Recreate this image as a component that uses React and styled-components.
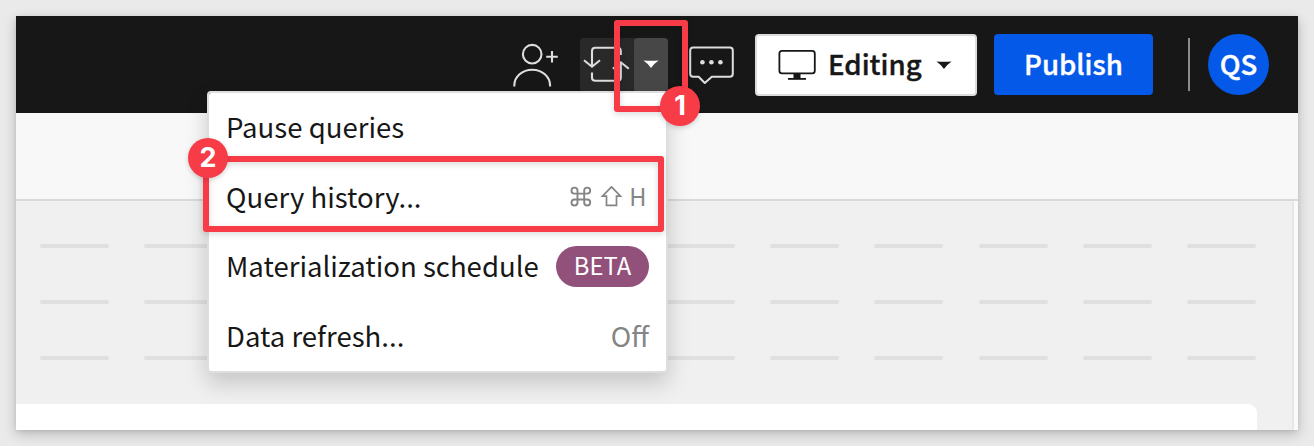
import React from "react";
import styled, { createGlobalStyle } from "styled-components";

const GlobalStyle = createGlobalStyle`
  * { box-sizing: border-box; }
  body {
    margin: 0;
    background: #eaeaea;
    font-family: "Noto Sans CJK JP", "Noto Sans", sans-serif;
    color: #171717;
    overflow: hidden;
  }
`;

const Page = styled.div`
  height: 446px;
  padding: 16px;
`;

const Window = styled.main`
  position: relative;
  display: flex;
  flex-direction: column;
  height: 414px;
  background: #f0f0f0;
  box-shadow: 0 4px 12px rgba(0, 0, 0, 0.22), 0 1px 4px rgba(0, 0, 0, 0.08);
`;

const Header = styled.header`
  display: flex;
  align-items: flex-start;
  justify-content: flex-end;
  height: 97px;
  flex: none;
  padding: 18px 29px 0 0;
  background: #171717;
`;

const IconButton = styled.div`
  display: flex;
  width: 48px;
  height: 54px;
  margin: 4px ${(p) => p.$gap}px 0 0;
`;

const SplitButton = styled.div`
  display: flex;
  width: 88px;
  height: 54px;
  margin: 4px 20px 0 0;
  border-radius: 4px;
  background: #292929;
`;

const SplitToggle = styled.div`
  display: flex;
  width: 34px;
  padding: 22px 0 0 9px;
  border-radius: 4px;
  background: #474747;
`;

const Button = styled.div`
  display: flex;
  align-items: center;
  width: ${(p) => p.$width}px;
  height: ${(p) => (p.$primary ? 61 : 62)}px;
  margin-right: ${(p) => (p.$primary ? 35 : 17)}px;
  padding-left: ${(p) => (p.$primary ? 30 : 21)}px;
  border: ${(p) => (p.$primary ? "0" : "2px solid #dcdcdc")};
  border-radius: 4px;
  background: ${(p) => (p.$primary ? "#0559e8" : "#fff")};
  color: ${(p) => (p.$primary ? "#fff" : "#171717")};
`;

const Label = styled.span`
  font-size: 27.6px;
  font-weight: 500;
  line-height: 56px;
  padding-bottom: 4px;
  -webkit-text-stroke: 0.4px currentColor;
  margin: 0 ${(p) => p.$after || 0}px 0 ${(p) => p.$before || 0}px;
  white-space: nowrap;
`;

const Divider = styled.div`
  width: 2px;
  height: 53px;
  margin: 4px 18px 0 0;
  background: #8b8b8b;
`;

const Avatar = styled.div`
  display: flex;
  align-items: center;
  justify-content: center;
  width: 61px;
  height: 61px;
  border-radius: 50%;
  background: #0559e8;
  color: #fff;
`;

const Toolbar = styled.div`
  height: 88px;
  flex: none;
  border-bottom: 2px solid #d9d9d9;
  background: #f8f8f8;
`;

const Workspace = styled.div`
  display: flex;
  flex: 1;
`;

const Canvas = styled.div`
  display: flex;
  flex-direction: column;
  flex: 1;
  padding-top: 43px;
`;

const DashRow = styled.div`
  display: flex;
  gap: 35.3px;
  height: 4px;
  padding-left: 24px;
  margin-bottom: 52px;
`;

const Dash = styled.span`
  width: 69px;
  flex: none;
  border-radius: 2px;
  background: #e0e0e0;
`;

const Card = styled.div`
  width: 1241px;
  flex: 1;
  margin-top: -8px;
  border-top-right-radius: 9px;
  background: #fff;
`;

const Gutter = styled.div`
  width: 6px;
  border-left: 2px solid #e7e7e7;
  background: #fafafa;
`;

const Menu = styled.div`
  position: absolute;
  left: 191px;
  top: 75px;
  width: 461px;
  height: 282px;
  border: 2px solid #dfdddd;
  border-radius: 4px;
  background: #fff;
  background-clip: padding-box;
  box-shadow: 0 10px 22px rgba(0, 0, 0, 0.18);
`;

const MenuRow = styled.div`
  display: flex;
  align-items: center;
  justify-content: space-between;
  height: 69.6px;
  padding: 0 ${(p) => p.$right || 17}px 0 17px;
  font-size: 27.55px;
  line-height: 40px;
  white-space: nowrap;
`;

const MenuText = styled.span`
  padding-bottom: 3px;
`;

const Shortcut = styled.span`
  display: flex;
  align-items: center;
  font-size: 23.6px;
  color: #858585;
`;

const Key = styled.span`
  padding-bottom: 3px;
`;

const Status = styled.span`
  padding-bottom: 3px;
  color: #858585;
`;

const BetaTag = styled.span`
  width: 93px;
  height: 41px;
  margin-bottom: 1px;
  border-radius: 21px;
  background: #92517a;
  color: #fff;
  font-size: 23.8px;
  line-height: 38px;
  text-align: center;
`;

const Highlight = styled.div`
  position: absolute;
  left: ${(p) => p.$x}px;
  top: ${(p) => p.$y}px;
  width: ${(p) => p.$w}px;
  height: ${(p) => p.$h}px;
  border: 6px solid #f73c47;
  border-radius: 3px;
  filter: drop-shadow(0 2px 3px rgba(0, 0, 0, 0.16));
`;

const StepBadge = styled.div`
  position: absolute;
  left: ${(p) => p.$x}px;
  top: ${(p) => p.$y}px;
  width: 40px;
  height: 40px;
  border-radius: 50%;
  background: #f73c47;
  color: #fff;
  font: 700 27px/39px Inter, sans-serif;
  text-align: center;
  box-shadow: 0 2px 5px rgba(0, 0, 0, 0.16);
`;

const Caret = ({ fill }) => (
  <svg width="16" height="9" viewBox="0 0 16 9">
    <path d="M0.4 0.4 Q8 1.2 15.6 0.4 Q11.5 3 8 8 Q4.5 3 0.4 0.4Z" fill={fill} />
  </svg>
);

const AddUserIcon = () => (
  <svg width="48" height="54" viewBox="512 38 48 54" fill="none" stroke="#dedede" strokeWidth="2.1">
    <circle cx="532.2" cy="54.2" r="9.3" />
    <path d="M514.3 86.5v-1a17.9 15.8 0 0 1 35.8 0v1M552 51v11.5M546.2 56.7h11.6" />
  </svg>
);

const SyncIcon = () => (
  <svg width="54" height="54" viewBox="580 38 54 54" fill="none" stroke="#dedede" strokeWidth="2.1">
    <path d="M592 66.5V51q0-3.3 3.3-3.3h22.2q3.3 0 3.3 3.3v4" />
    <path d="M584 60.2l8 6.5 8-6.5" />
    <path d="M592 72.5v5q0 3.3 3.3 3.3h22.2q3.3 0 3.3-3.3V62.7" />
    <path d="M612.8 68.8l8-6.5 8 6.5" />
  </svg>
);

const CommentIcon = () => (
  <svg width="48" height="54" viewBox="688 38 48 54" fill="none" stroke="#dedede" strokeWidth="2">
    <path d="M693.2 47.5h36.6q3 0 3 3v23.2q0 3-3 3h-18l-7 6.3-6.2-6.3h-5.4q-3 0-3-3V50.5q0-3 3-3z" strokeLinejoin="round" />
    <g fill="#dedede" stroke="none">
      <circle cx="702.4" cy="62.3" r="2.3" />
      <circle cx="711.4" cy="62.3" r="2.3" />
      <circle cx="720.4" cy="62.3" r="2.3" />
    </g>
  </svg>
);

const MonitorIcon = () => (
  <svg width="38" height="32" viewBox="778 49 38 32" fill="none" stroke="#171717">
    <rect x="779.4" y="50.9" width="35.4" height="22.4" rx="2.6" strokeWidth="1.8" />
    <path d="M793.5 74h7v4h-7z" fill="#171717" stroke="none" />
    <path d="M788 78.9h18" strokeWidth="1.8" />
  </svg>
);

const CommandIcon = () => (
  <svg width="22" height="22" viewBox="570 186 22 22" fill="none" stroke="#858585" strokeWidth="1.9">
    <path d="M577.5 193.6h-3a3 3 0 1 1 3-3.2v12.2a3 3 0 1 1-3-3.1h12.8a3 3 0 1 1-3.1 3.1v-12.2a3 3 0 1 1 3.1 3.2z" />
  </svg>
);

const ShiftIcon = () => (
  <svg width="37" height="22" viewBox="592 186 37 22" fill="none" stroke="#858585" strokeWidth="1.7">
    <path d="M611.5 186.8l9 9.3h-4v9.2h-10v-9.2h-4z" />
  </svg>
);

export default function App() {
  return (
    <>
      <GlobalStyle />
      <Page>
        <Window>
          <Header>
            <IconButton $gap={20}><AddUserIcon /></IconButton>
            <SplitButton>
              <SyncIcon />
              <SplitToggle><Caret fill="#fff" /></SplitToggle>
            </SplitButton>
            <IconButton $gap={19}><CommentIcon /></IconButton>
            <Button $width={222}>
              <MonitorIcon />
              <Label $before={12} $after={14.5}>Editing</Label>
              <Caret fill="#171717" />
            </Button>
            <Button $primary $width={159}><Label>Publish</Label></Button>
            <Divider />
            <Avatar><Label>QS</Label></Avatar>
          </Header>
          <Toolbar />
          <Workspace>
            <Canvas>
              {[0, 1, 2].map((row) => (
                <DashRow key={row}>
                  {Array.from({ length: 12 }, (_, i) => <Dash key={i} />)}
                </DashRow>
              ))}
              <Card />
            </Canvas>
            <Gutter />
          </Workspace>
          <Menu>
            <MenuRow><MenuText>Pause queries</MenuText></MenuRow>
            <MenuRow $right={19.5}>
              <MenuText>Query history...</MenuText>
              <Shortcut><CommandIcon /><ShiftIcon /><Key>H</Key></Shortcut>
            </MenuRow>
            <MenuRow>
              <MenuText>Materialization schedule</MenuText>
              <BetaTag>BETA</BetaTag>
            </MenuRow>
            <MenuRow><MenuText>Data refresh...</MenuText><Status>Off</Status></MenuRow>
          </Menu>
          <Highlight $x={598} $y={4} $w={74} $h={92} />
          <Highlight $x={187} $y={140} $w={461} $h={76} />
          <StepBadge $x={644} $y={70}>1</StepBadge>
          <StepBadge $x={172} $y={122}>2</StepBadge>
        </Window>
      </Page>
    </>
  );
}
